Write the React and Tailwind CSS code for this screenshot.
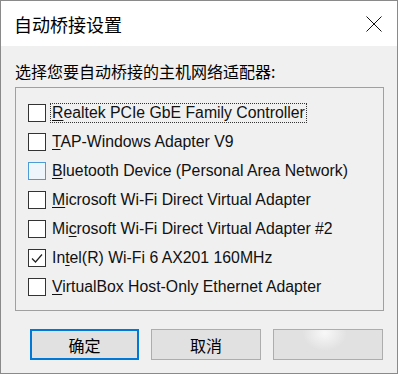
import React from 'react';

const FONT = { fontFamily: '"Liberation Sans", "Noto Sans CJK SC", sans-serif' };
const CJK = { fontFamily: '"Noto Sans CJK SC", "Liberation Sans", sans-serif' };

const ADAPTERS = [
  { pre: '', key: 'R', post: 'ealtek PCIe GbE Family Controller', focus: true },
  { pre: '', key: 'T', post: 'AP-Windows Adapter V9' },
  { pre: '', key: 'B', post: 'luetooth Device (Personal Area Network)', hover: true },
  { pre: '', key: 'M', post: 'icrosoft Wi-Fi Direct Virtual Adapter' },
  { pre: 'Mi', key: 'c', post: 'rosoft Wi-Fi Direct Virtual Adapter #2' },
  { pre: 'In', key: 't', post: 'el(R) Wi-Fi 6 AX201 160MHz', checked: true },
  { pre: '', key: 'V', post: 'irtualBox Host-Only Ethernet Adapter' },
];

function Checkbox({ checked, hover }) {
  return (
    <div
      className={`w-[18px] h-[18px] shrink-0 border flex items-center justify-center ${
        hover ? 'border-[#4c9bd6] bg-[#eef6fc]' : 'border-[#333333] bg-white'
      }`}
    >
      {checked && (
        <svg width="14" height="14" viewBox="0 0 14 14">
          <polyline points="2,7.5 5.5,11 12,3.5" fill="none" stroke="#222" strokeWidth="1.2" />
        </svg>
      )}
    </div>
  );
}

export default function App() {
  return (
    <div className="w-[399px] h-[377px] bg-white" style={FONT}>
      <div className="w-[398px] h-[374px] border border-[#8a8a8a] flex flex-col bg-[#f0f0f0]">
        <div className="h-[45px] bg-white flex items-center justify-between pl-[13px] pr-[15px]">
          <span className="text-[18px] text-black leading-none" style={CJK}>自动桥接设置</span>
          <svg width="16" height="16" viewBox="0 0 16 16">
            <path d="M0.5 0.5 L15.5 15.5 M15.5 0.5 L0.5 15.5" stroke="#111" strokeWidth="1" />
          </svg>
        </div>

        <div className="flex-1 px-[14px]">
          <div className="pt-[15px] h-[41px] text-[16px] leading-[20px] text-black" style={CJK}>
            选择您要自动桥接的主机网络适配器:
          </div>

          <div className="w-[369px] h-[224px] border border-[#a0a0a0] pt-[10px] pl-[12px]">
            {ADAPTERS.map((a, i) => (
              <div key={i} className="h-[29px] flex items-center gap-[5px]">
                <Checkbox checked={a.checked} hover={a.hover} />
                <span
                  className={`text-[15.8px] leading-[18px] text-[#111] px-[1px] whitespace-nowrap ${
                    a.focus ? 'outline outline-1 outline-dotted outline-[#333]' : ''
                  }`}
                >
                  {a.pre}
                  <span className="underline underline-offset-2">{a.key}</span>
                  {a.post}
                </span>
              </div>
            ))}
          </div>

          <div className="mt-[18px] flex justify-end gap-[12px]">
            <button
              className="w-[109px] h-[31px] border-2 border-[#0078d7] bg-[#e1e1e1] text-[16px] text-black flex items-center justify-center"
              style={CJK}
            >
              确定
            </button>
            <button
              className="w-[110px] h-[31px] border border-[#adadad] bg-[#e1e1e1] text-[16px] text-black flex items-center justify-center"
              style={CJK}
            >
              取消
            </button>
            <button className="w-[110px] h-[31px] border border-[#adadad] bg-[radial-gradient(ellipse_22px_18px_at_47%_10%,#f8f8f8_0%,#e1e1e1_100%)]" />
          </div>
        </div>
      </div>
    </div>
  );
}
